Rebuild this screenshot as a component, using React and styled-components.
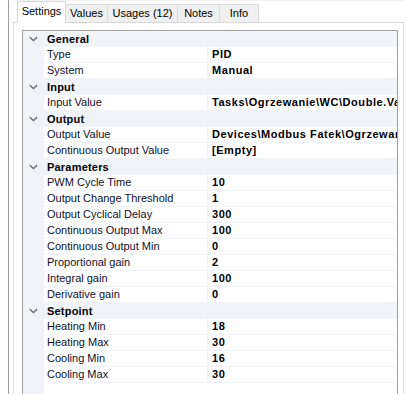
import styled, { createGlobalStyle } from 'styled-components';

const GUTTER = '#f0f4f9';

const GlobalStyle = createGlobalStyle`
  html, body {
    margin: 0;
    padding: 0;
    background: #ffffff;
  }
  body {
    font-family: "Liberation Sans", Arial, sans-serif;
    font-size: 11px;
    color: #000000;
  }
`;

const Window = styled.div`
  display: flex;
  width: 406px;
  height: 394px;
  overflow: hidden;
  background: #ffffff;
`;

const SidePanel = styled.div`
  width: 8px;
  flex-shrink: 0;
  border-right: 1px solid #a0a0a0;
  margin-right: 4px;
`;

const TabControl = styled.div`
  display: flex;
  flex-direction: column;
  width: 391px;
  flex-shrink: 0;
  border-top: 1px solid #f2f2f2;
`;

const TabStrip = styled.div`
  display: flex;
  align-items: flex-end;
  height: 21px;
  padding-left: 4px;
`;

const Tab = styled.div`
  position: relative;
  box-sizing: border-box;
  width: ${(p) => p.$width}px;
  height: ${(p) => (p.$active ? 22 : 18)}px;
  margin-left: -1px;
  margin-bottom: ${(p) => (p.$active ? -1 : 0)}px;
  border: 1px solid #d9d9d9;
  border-bottom: none;
  background: ${(p) => (p.$active ? '#ffffff' : '#f0f0f0')};
  z-index: ${(p) => (p.$active ? 2 : 1)};
  text-align: center;
  line-height: ${(p) => (p.$active ? 18 : 17)}px;
  white-space: nowrap;
  &:first-child {
    margin-left: 0;
  }
`;

const TabPanel = styled.div`
  flex: 1;
  display: flex;
  flex-direction: column;
  border: 1px solid #d9d9d9;
  border-bottom: none;
  padding: 7px 5px 0 8px;
  min-height: 0;
`;

const Grid = styled.div`
  flex: 1;
  border: 1px solid #a0a0a0;
  border-bottom: none;
  background: linear-gradient(to right, ${GUTTER} 21px, #ffffff 21px);
  overflow: hidden;
`;

const CategoryRow = styled.div`
  display: flex;
  align-items: center;
  height: 16px;
  background: ${GUTTER};
`;

const Toggle = styled.div`
  display: flex;
  align-items: center;
  justify-content: center;
  width: 21px;
  height: 16px;
  color: #606060;
`;

const CategoryTitle = styled.div`
  padding-left: 3px;
  font-weight: 700;
  line-height: 16px;
  letter-spacing: 0.2px;
`;

const PropRow = styled.div`
  display: grid;
  grid-template-columns: 21px 164px 1fr;
  height: 16px;
`;

const Spacer = styled.div`
  background: ${GUTTER};
`;

const NameCell = styled.div`
  box-sizing: border-box;
  padding-left: 3px;
  border-right: 1px solid ${GUTTER};
  border-bottom: 1px solid ${GUTTER};
  background: #ffffff;
  line-height: 15px;
  color: #10102a;
  white-space: nowrap;
  overflow: hidden;
`;

const ValueCell = styled.div`
  box-sizing: border-box;
  padding-left: 4px;
  border-bottom: 1px solid ${GUTTER};
  background: #ffffff;
  line-height: 15px;
  font-weight: 700;
  letter-spacing: 0.55px;
  white-space: nowrap;
  overflow: hidden;
`;

function Chevron() {
  return (
    <svg width="9" height="6" viewBox="0 0 9 6" fill="none">
      <path d="M0.8 1 L4.5 4.6 L8.2 1" stroke="currentColor" strokeWidth="1.3" />
    </svg>
  );
}

const tabs = [
  { label: 'Settings', width: 49, active: true },
  { label: 'Values', width: 43 },
  { label: 'Usages (12)', width: 71 },
  { label: 'Notes', width: 43 },
  { label: 'Info', width: 40 },
];

const categories = [
  {
    title: 'General',
    props: [
      ['Type', 'PID'],
      ['System', 'Manual'],
    ],
  },
  {
    title: 'Input',
    props: [['Input Value', 'Tasks\\Ogrzewanie\\WC\\Double.Value']],
  },
  {
    title: 'Output',
    props: [
      ['Output Value', 'Devices\\Modbus Fatek\\Ogrzewanie\\WC'],
      ['Continuous Output Value', '[Empty]'],
    ],
  },
  {
    title: 'Parameters',
    props: [
      ['PWM Cycle Time', '10'],
      ['Output Change Threshold', '1'],
      ['Output Cyclical Delay', '300'],
      ['Continuous Output Max', '100'],
      ['Continuous Output Min', '0'],
      ['Proportional gain', '2'],
      ['Integral gain', '100'],
      ['Derivative gain', '0'],
    ],
  },
  {
    title: 'Setpoint',
    props: [
      ['Heating Min', '18'],
      ['Heating Max', '30'],
      ['Cooling Min', '16'],
      ['Cooling Max', '30'],
    ],
  },
];

export default function App() {
  return (
    <>
      <GlobalStyle />
      <Window>
        <SidePanel />
        <TabControl>
          <TabStrip>
            {tabs.map((t) => (
              <Tab key={t.label} $width={t.width} $active={t.active}>
                {t.label}
              </Tab>
            ))}
          </TabStrip>
          <TabPanel>
            <Grid>
              {categories.map((c) => (
                <div key={c.title}>
                  <CategoryRow>
                    <Toggle>
                      <Chevron />
                    </Toggle>
                    <CategoryTitle>{c.title}</CategoryTitle>
                  </CategoryRow>
                  {c.props.map(([name, value]) => (
                    <PropRow key={name}>
                      <Spacer />
                      <NameCell>{name}</NameCell>
                      <ValueCell>{value}</ValueCell>
                    </PropRow>
                  ))}
                </div>
              ))}
            </Grid>
          </TabPanel>
        </TabControl>
      </Window>
    </>
  );
}
